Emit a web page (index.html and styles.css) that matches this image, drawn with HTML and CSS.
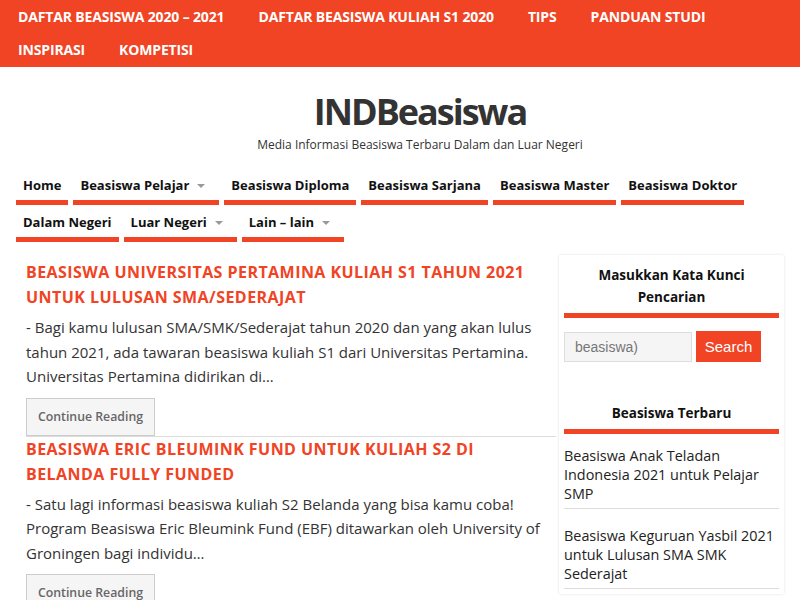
FILE: index.html
```html
<!DOCTYPE html>
<html lang="id">
<head>
<meta charset="utf-8">
<title>INDBeasiswa</title>
<link rel="stylesheet" href="styles.css">
</head>
<body>
<nav class="topbar">
  <a href="#">DAFTAR BEASISWA 2020 – 2021</a>
  <a href="#">DAFTAR BEASISWA KULIAH S1 2020</a>
  <a href="#">TIPS</a>
  <a href="#">PANDUAN STUDI</a>
  <a href="#">INSPIRASI</a>
  <a href="#">KOMPETISI</a>
</nav>

<header class="site-header">
  <h1 class="site-title">INDBeasiswa</h1>
  <p class="tagline">Media Informasi Beasiswa Terbaru Dalam dan Luar Negeri</p>
</header>

<nav class="menu">
  <a href="#" class="menu-item">Home</a>
  <a href="#" class="menu-item">Beasiswa Pelajar<span class="caret"></span></a>
  <a href="#" class="menu-item">Beasiswa Diploma</a>
  <a href="#" class="menu-item">Beasiswa Sarjana</a>
  <a href="#" class="menu-item">Beasiswa Master</a>
  <a href="#" class="menu-item">Beasiswa Doktor</a>
  <a href="#" class="menu-item">Dalam Negeri</a>
  <a href="#" class="menu-item">Luar Negeri<span class="caret"></span></a>
  <a href="#" class="menu-item">Lain – lain<span class="caret"></span></a>
</nav>

<div class="layout">
  <main class="posts">
    <article class="post">
      <h2 class="post-title">Beasiswa Universitas Pertamina Kuliah S1 Tahun 2021 untuk Lulusan SMA/Sederajat</h2>
      <p class="excerpt">- Bagi kamu lulusan SMA/SMK/Sederajat tahun 2020 dan yang akan lulus tahun 2021, ada tawaran beasiswa kuliah S1 dari Universitas Pertamina. Universitas Pertamina didirikan di…</p>
      <a href="#" class="more">Continue Reading</a>
    </article>
    <article class="post">
      <h2 class="post-title">Beasiswa Eric Bleumink Fund untuk Kuliah S2 di Belanda Fully Funded</h2>
      <p class="excerpt">- Satu lagi informasi beasiswa kuliah S2 Belanda yang bisa kamu coba! Program Beasiswa Eric Bleumink Fund (EBF) ditawarkan oleh University of Groningen bagi individu…</p>
      <a href="#" class="more">Continue Reading</a>
    </article>
  </main>

  <aside class="sidebar">
    <section class="widget">
      <h3 class="widget-title">Masukkan Kata Kunci Pencarian</h3>
      <form class="search">
        <input class="search-input" type="text" placeholder="beasiswa)">
        <button class="search-btn" type="button">Search</button>
      </form>
    </section>
    <section class="widget widget-recent">
      <h3 class="widget-title">Beasiswa Terbaru</h3>
      <ul class="recent">
        <li>Beasiswa Anak Teladan Indonesia 2021 untuk Pelajar SMP</li>
        <li>Beasiswa Keguruan Yasbil 2021 untuk Lulusan SMA SMK Sederajat</li>
      </ul>
    </section>
  </aside>
</div>
</body>
</html>
```

FILE: styles.css
```css
* { box-sizing: border-box; }

body {
  margin: 0;
  font-family: "Open Sans", "DejaVu Sans", sans-serif;
  color: #333;
  background: #fff;
  overflow: hidden;
}

a { text-decoration: none; }

.topbar {
  background: #f04424;
  display: flex;
  flex-wrap: wrap;
  padding: 0 0 1px 1px;
}

.topbar a {
  color: #fff;
  font-weight: 700;
  font-size: 14px;
  letter-spacing: -0.15px;
  line-height: 33px;
  padding: 0 17px;
}

.site-header {
  text-align: center;
  padding: 23px 0 0 40px;
}

.site-title {
  margin: 0;
  font-size: 36px;
  line-height: 44px;
  font-weight: 700;
  letter-spacing: -2px;
  color: #333;
}

.tagline {
  margin: 2px 0 0;
  font-size: 12px;
  line-height: 18px;
  color: #333;
}

.menu {
  display: flex;
  flex-wrap: wrap;
  padding: 0 16px;
  margin-top: 14px;
}

.menu-item {
  display: flex;
  align-items: center;
  margin-right: 5px;
  padding: 7px 7px 5px;
  line-height: 20px;
  font-size: 13px;
  font-weight: 700;
  color: #111;
  border-bottom: 5px solid #f04424;
}

.caret {
  width: 0;
  height: 0;
  margin: 1px 7px 0 8px;
  border-left: 4px solid transparent;
  border-right: 4px solid transparent;
  border-top: 4px solid #999;
}

.layout {
  display: flex;
  align-items: flex-start;
  padding: 0 16px 0 26px;
  margin-top: 13px;
}

.posts {
  width: 530px;
  padding-top: 5px;
}

.post {
  border-bottom: 1px solid #ddd;
}

.post-title {
  margin: 0;
  font-size: 16px;
  line-height: 25px;
  font-weight: 700;
  letter-spacing: 0.45px;
  text-transform: uppercase;
  color: #f04424;
}

.excerpt {
  margin: 5px 0 9px;
  font-size: 15px;
  line-height: 24.5px;
  color: #333;
}

.more {
  display: inline-block;
  vertical-align: top;
  width: 129px;
  height: 38px;
  line-height: 36px;
  text-align: center;
  background: #f5f5f5;
  border: 1px solid #ccc;
  font-size: 12.3px;
  font-weight: 600;
  color: #666;
}

.sidebar {
  width: 225px;
  margin-left: 3px;
  padding: 9px 5px 0;
  box-shadow: 0 0 3px rgba(0, 0, 0, 0.12);
  border-radius: 2px;
}

.widget-title {
  margin: 0;
  text-align: center;
  font-size: 13.5px;
  line-height: 22px;
  font-weight: 700;
  color: #111;
  padding-bottom: 5px;
  border-bottom: 5px solid #f04424;
}

.search {
  display: flex;
  align-items: center;
  gap: 4px;
  margin-top: 13px;
}

.search-input {
  width: 128px;
  height: 30px;
  padding: 0 10px;
  border: 1px solid #ddd;
  background: #f5f5f5;
  font-family: "Liberation Sans", Arial, sans-serif;
  font-size: 14px;
  color: #777;
}

.search-input::placeholder { color: #777; }

.search-btn {
  width: 65px;
  height: 31px;
  border: 0;
  background: #f04424;
  color: #fff;
  font-family: "Liberation Sans", Arial, sans-serif;
  font-size: 15px;
  padding: 0;
}

.widget-recent {
  margin-top: 40px;
}

.recent {
  list-style: none;
  margin: 0;
  padding: 0;
}

.recent li {
  padding: 12px 0 5px;
  margin-bottom: 5px;
  border-bottom: 1px solid #ddd;
  font-size: 14.4px;
  line-height: 19px;
  color: #222;
}
```
